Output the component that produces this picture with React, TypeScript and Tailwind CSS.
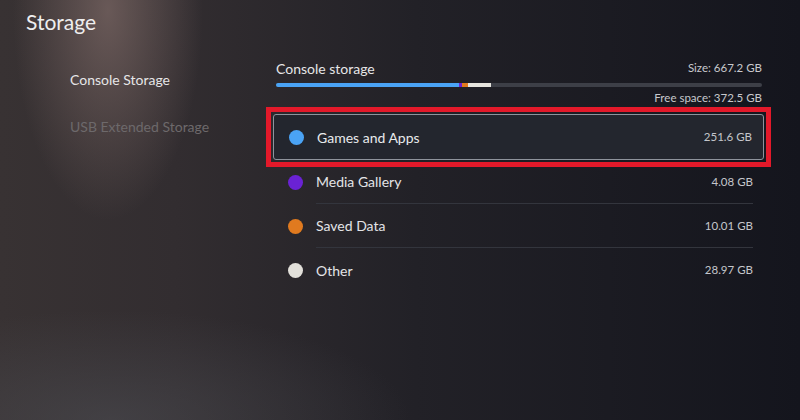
import React from 'react';

interface StorageItem {
  label: string;
  size: string;
  dot: string;
  selected?: boolean;
}

const items: StorageItem[] = [
  { label: 'Games and Apps', size: '251.6 GB', dot: 'bg-[#4aa3f5]', selected: true },
  { label: 'Media Gallery', size: '4.08 GB', dot: 'bg-[#6a22d4]' },
  { label: 'Saved Data', size: '10.01 GB', dot: 'bg-[#e07a1f]' },
  { label: 'Other', size: '28.97 GB', dot: 'bg-[#e2e0da]' },
];

const StorageRow: React.FC<{ item: StorageItem; last: boolean }> = ({ item, last }) => {
  if (item.selected) {
    // red highlight frame sits over the row, square corners
    return (
      <div className="-ml-[6px] -mr-[7px] -my-[7px] border-[5px] border-[#e3192a] p-[2px]">
        <div className="h-[46px] flex items-center pl-[15px] pr-[11px] rounded-[3px] border border-[#8e939c] bg-[#23262e]">
          <span className={`w-[15px] h-[15px] rounded-full ${item.dot}`} />
          <span className="ml-[13px] text-[14px] text-[#e8eaec]">{item.label}</span>
          <span className="ml-auto text-[11.5px] text-[#c4c6cb]">{item.size}</span>
        </div>
      </div>
    );
  }
  return (
    <div className="h-[44px] flex items-center pl-[16px] pr-[11px]">
      <span className={`w-[15px] h-[15px] rounded-full shrink-0 ${item.dot}`} />
      <div className={`ml-[13px] flex-1 h-full flex items-center ${last ? '' : 'border-b border-[#33353d]'}`}>
        <span className="text-[14px] text-[#e3e4e7]">{item.label}</span>
        <span className="ml-auto text-[11.5px] text-[#c4c6cb]">{item.size}</span>
      </div>
    </div>
  );
};

const App: React.FC = () => {
  return (
    <div
      className="w-[800px] h-[420px] overflow-hidden text-white bg-[radial-gradient(ellipse_95px_210px_at_108px_10px,rgba(125,105,102,0.72),transparent),radial-gradient(ellipse_300px_110px_at_110px_420px,rgba(80,81,87,0.5),transparent),linear-gradient(90deg,#383233_0%,#322d30_22%,#222127_52%,#14151d_100%)]"
      style={{ fontFamily: 'Lato, "Noto Sans", sans-serif' }}
    >
      <div className="pl-[26px] pt-[7px] text-[21px] leading-[30px] text-[#eeeeee]">Storage</div>

      <div className="flex">
        <div className="w-[272px] pl-[70px] pt-[31px]">
          <div className="text-[14px] leading-[24px] text-[#e6e6e7]">Console Storage</div>
          <div className="mt-[23px] text-[14px] leading-[24px] text-[#6d696b]">USB Extended Storage</div>
        </div>

        <div className="w-[492px] pt-[21px]">
          <div className="pl-[4px] pr-[2px]">
            <div className="flex items-center h-[20px]">
              <span className="text-[14px] text-[#e6e6e7]">Console storage</span>
              <span className="ml-auto text-[11.5px] text-[#c8c9cd]">Size: 667.2 GB</span>
            </div>
            <div className="mt-[5px] h-[4px] rounded-full bg-[#3d3f47] flex overflow-hidden">
              <div className="w-[183px] bg-[#4aa3f5]" />
              <div className="w-[3px] bg-[#6a22d4]" />
              <div className="w-[6px] bg-[#e07a1f]" />
              <div className="w-[23px] bg-[#e6e4de]" />
            </div>
            <div className="mt-[3px] h-[16px] flex items-center justify-end text-[11.5px] text-[#c8c9cd]">
              Free space: 372.5 GB
            </div>
          </div>

          <div className="mt-[8px]">
            {items.map((item, i) => (
              <StorageRow key={item.label} item={item} last={i === items.length - 1} />
            ))}
          </div>
        </div>
      </div>
    </div>
  );
};

export default App;
